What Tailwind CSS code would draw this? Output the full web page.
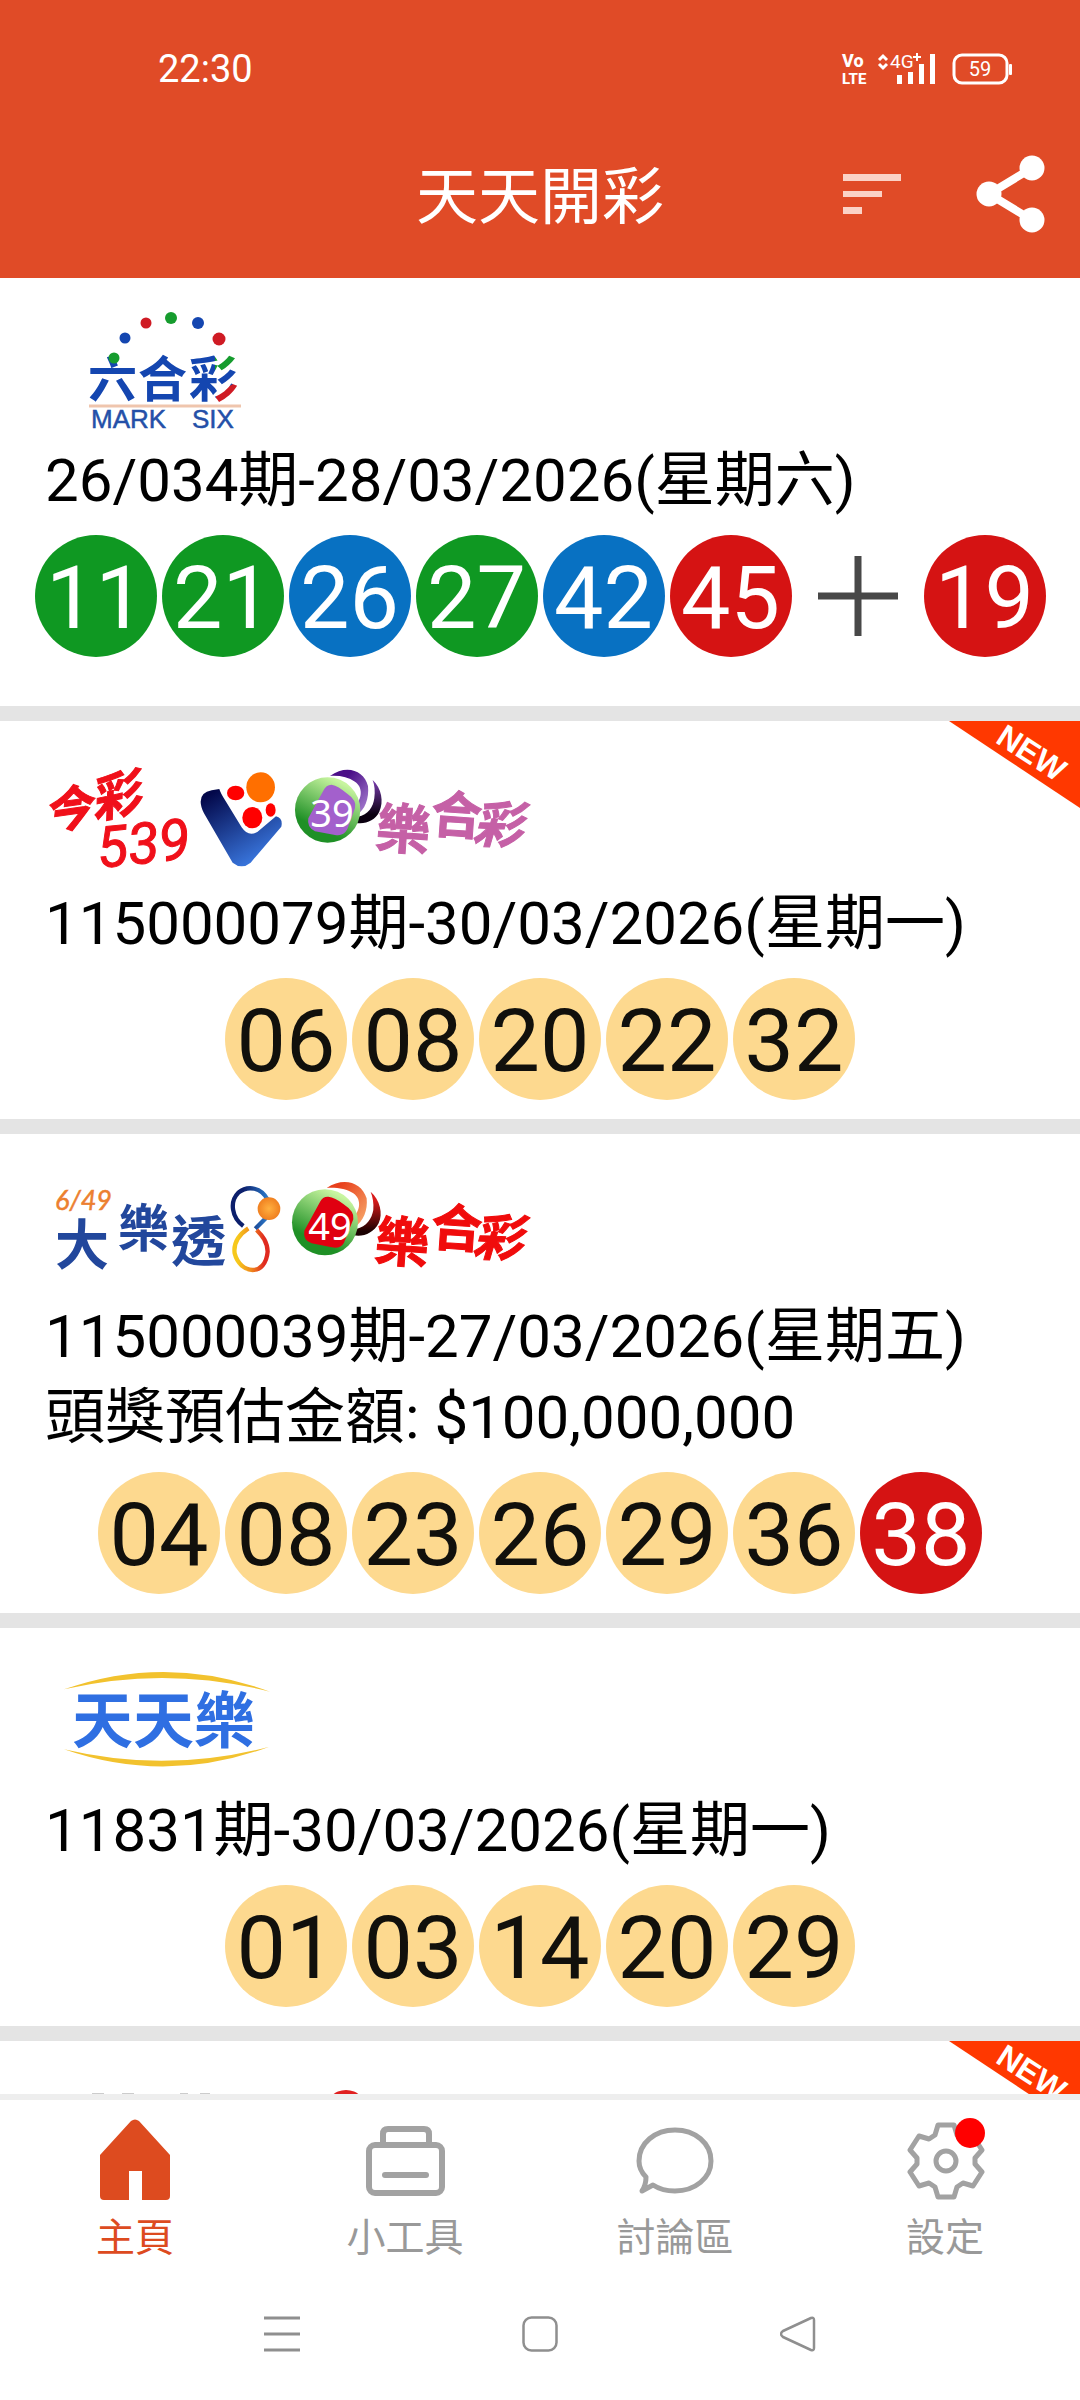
<!DOCTYPE html>
<html lang="zh-Hant">
<head>
  <meta charset="UTF-8">
  <meta name="viewport" content="width=device-width, initial-scale=1.0">
  <title>天天開彩</title>
  <script src="https://cdn.jsdelivr.net/npm/@tailwindcss/browser@4"></script>
</head>
<body class="h-screen flex flex-col bg-white text-black font-['Roboto','Noto_Sans_CJK_TC',sans-serif]">
  <header class="bg-[#e04b27] text-white">
    <!-- Status bar -->
    <div class="flex items-center justify-between pt-11 pb-6 pl-[158px] pr-[68px]">
      <span class="text-[38px] leading-[50px]">22:30</span>
      <svg class="w-[170px] h-8 overflow-visible" viewBox="0 0 170 32" fill="#fff" aria-label="4G+ 59%">
        <g font-family="Roboto, sans-serif" font-weight="800">
          <text x="0" y="14" font-size="18">Vo</text>
          <text x="0" y="31" font-size="15">LTE</text>
        </g>
        <path d="M37 7l4-4 4 4M37 11l4 4 4-4" fill="none" stroke="#fff" stroke-width="3"/>
        <text x="48" y="15" font-size="19" font-family="Roboto, sans-serif">4G</text>
        <path d="M75 0v8M71 4h8" stroke="#fff" stroke-width="2"/>
        <path d="M55 22h5v9h-5zM66 19h5v12h-5zM77 11h5v20h-5zM88 1h5v30h-5z"/>
        <rect x="112" y="2" width="53" height="28" rx="8" fill="none" stroke="#fff" stroke-width="3"/>
        <rect x="167" y="11" width="3" height="11" rx="1"/>
        <text x="138" y="23" font-size="20" text-anchor="middle" font-family="Roboto, sans-serif">59</text>
      </svg>
    </div>
    <!-- App bar -->
    <div class="grid grid-cols-[1fr_auto_1fr] items-center h-[160px]">
      <h1 class="col-start-2 text-[62px] leading-[90px]">天天開彩</h1>
      <div class="flex items-center justify-end gap-[75px] pb-2 pr-[35px]">
        <button type="button" aria-label="排序">
          <svg class="w-[58px] h-10" viewBox="0 0 58 40" fill="#fbd2c6"><path d="M0 0h58v7H0zM0 17h39v6H0zM0 33h19v7H0z"/></svg>
        </button>
        <button type="button" aria-label="分享">
          <svg class="w-[69px] h-20" viewBox="0 0 69 80" fill="#fff">
            <path d="M56 14L13 40l43 26" fill="none" stroke="#fff" stroke-width="8"/>
            <circle cx="56" cy="14" r="12.5"/><circle cx="13" cy="40" r="12.5"/><circle cx="56" cy="66" r="12.5"/>
          </svg>
        </button>
      </div>
    </div>
  </header>

  <main class="flex-1 min-h-0 overflow-hidden divide-y-[15px] divide-[#e4e4e4]">
    <!-- Mark Six -->
    <section class="pb-[49px]">
      <svg class="block ml-[45px] w-[515px] h-[162px]" viewBox="45 0 515 162" role="img" aria-label="六合彩 Mark Six">
        <defs>
          <!-- 彩: three right-hand strokes in green, blue and red -->
          <pattern id="strokes" patternUnits="userSpaceOnUse" x="180" y="60" width="70" height="80">
            <path d="M0 0h70v80H0z" fill="#1446b0"/>
            <path d="M35 0h35v22L35 37z" fill="#169c2e"/>
            <path d="M36 80V56L70 36v44z" fill="#cf1b24"/>
          </pattern>
        </defs>
        <g font-family="Noto Sans CJK TC, sans-serif" font-size="49" font-weight="700" fill="#1446b0">
          <text x="88" y="119">六</text>
          <text x="138" y="119">合</text>
          <text x="189" y="119" fill="url(#strokes)">彩</text>
        </g>
        <circle cx="114" cy="80" r="5.5" fill="#169c2e"/>
        <circle cx="125" cy="60" r="5.5" fill="#1446b0"/>
        <circle cx="146" cy="45" r="5.5" fill="#cf1b24"/>
        <circle cx="171" cy="40" r="6" fill="#169c2e"/>
        <circle cx="198" cy="45" r="6" fill="#1446b0"/>
        <circle cx="219" cy="61" r="6.5" fill="#cf1b24"/>
        <path d="M89 128h152" stroke="#efc5ad" stroke-width="3"/>
        <g font-family="Liberation Sans, sans-serif" font-size="26" fill="#2450a8" stroke="#2450a8" stroke-width="0.5">
          <text x="91" y="150">MARK</text>
          <text x="192" y="150">SIX</text>
        </g>
      </svg>
      <p class="px-[45px] text-[60px] leading-[81px]">26/034期-28/03/2026(星期六)</p>
      <ul class="mt-3.5 flex justify-center gap-[5px] text-white text-[88px] leading-[126px] text-center">
        <li class="size-[122px] rounded-full bg-[#0f9822]">11</li>
        <li class="size-[122px] rounded-full bg-[#0f9822]">21</li>
        <li class="size-[122px] rounded-full bg-[#0871c2]">26</li>
        <li class="size-[122px] rounded-full bg-[#0f9822]">27</li>
        <li class="size-[122px] rounded-full bg-[#0871c2]">42</li>
        <li class="size-[122px] rounded-full bg-[#d51313]">45</li>
        <li class="size-[122px] flex items-center justify-center" aria-label="特別號碼">
          <svg class="size-20" viewBox="0 0 80 80"><path d="M40 0v80M0 40h80" stroke="#484848" stroke-width="7"/></svg>
        </li>
        <li class="size-[122px] rounded-full bg-[#d51313]">19</li>
      </ul>
    </section>

    <!-- 539 -->
    <section class="relative pb-[19px]">
      <svg class="absolute top-0 right-0 w-[131px] h-[87px]" viewBox="0 0 131 87">
        <path d="M0 0h131v87z" fill="#ff3800"/>
        <text transform="translate(83 31) rotate(33)" y="12" text-anchor="middle" font-family="Liberation Sans, sans-serif" font-size="32" font-weight="700" fill="#fff">NEW</text>
      </svg>
      <svg class="block ml-[45px] w-[515px] h-[162px] overflow-visible" viewBox="45 0 515 162" role="img" aria-label="今彩539 39樂合彩">
        <defs>
          <linearGradient id="navy" x1="0" y1="0" x2="0.6" y2="1"><stop offset="0.1" stop-color="#03084a"/><stop offset="1" stop-color="#3a78e0"/></linearGradient>
          <linearGradient id="ball-green" x1="0.8" y1="0" x2="0.3" y2="1"><stop offset="0.1" stop-color="#c8f5a0"/><stop offset="0.8" stop-color="#1f9026"/></linearGradient>
          <linearGradient id="purple-ring" x1="0" y1="0" x2="1" y2="1"><stop offset="0.3" stop-color="#4b0f88"/><stop offset="1" stop-color="#b08ad8"/></linearGradient>
          <linearGradient id="dark-purple" x1="0" y1="0" x2="0" y2="1"><stop offset="0" stop-color="#7a3cb0"/><stop offset="0.8" stop-color="#0a0010"/></linearGradient>
        </defs>
        <g font-family="Noto Sans CJK TC, sans-serif" font-weight="700" font-style="italic" fill="#f0101a" stroke="#f0101a">
          <text transform="translate(46 109) rotate(-8)" font-size="48">今</text>
          <text transform="translate(94 98) rotate(-12)" font-size="50">彩</text>
        </g>
        <text transform="translate(99 147) rotate(-6)" font-family="Roboto, sans-serif" font-size="57" font-style="italic" fill="#f0101a" stroke="#f0101a">539</text>
        <g transform="translate(30 29) scale(.3333)">
          <path d="M512 155Q512 127 545 121L568 117Q572 130 585 150L635 232Q655 262 682 246L738 199Q760 205 754 230L662 338Q635 360 608 338L522 190Q512 170 512 155Z" fill="url(#navy)"/>
          <ellipse cx="617" cy="129" rx="26" ry="22" fill="#f00"/>
          <ellipse cx="692" cy="112" rx="43" ry="45" fill="#ff6f00"/>
          <ellipse cx="667" cy="203" rx="30" ry="32" fill="#f00"/>
          <ellipse cx="722" cy="180" rx="15" ry="20" fill="#f00"/>
          <path d="M900 78C950 42 1003 62 1014 108C1018 145 1005 180 980 195L972 170C1000 145 998 110 975 95C955 82 930 76 900 78Z" fill="url(#purple-ring)"/>
          <path d="M1028 90C1055 115 1062 155 1048 185C1035 212 1005 224 976 218L984 200C1015 195 1030 170 1033 145C1036 125 1034 105 1028 90Z" fill="url(#dark-purple)"/>
          <circle cx="893" cy="180" r="98" fill="url(#ball-green)"/>
          <path d="M905 104Q925 108 950 130Q982 152 975 175L952 238Q940 260 915 255L855 244Q830 232 835 205L880 122Q888 104 905 104Z" fill="#a360cc"/>
        </g>
        <text x="332" y="106" text-anchor="middle" font-family="Noto Sans, sans-serif" font-size="38" fill="#fff">39</text>
        <g font-family="Noto Sans CJK TC, sans-serif" font-weight="700" fill="#c560a6" stroke="#c560a6">
          <text transform="translate(375 126) rotate(4)" font-size="54">樂</text>
          <text transform="translate(430 111) rotate(4)" font-size="51">合</text>
          <text transform="translate(472 121) rotate(2)" font-size="50" font-style="italic">彩</text>
        </g>
      </svg>
      <p class="px-[45px] text-[60px] leading-[81px]">115000079期-30/03/2026(星期一)</p>
      <ul class="mt-3.5 flex justify-center gap-[5px] text-[#11100c] text-[88px] leading-[126px] text-center">
        <li class="size-[122px] rounded-full bg-[#fdd98f]">06</li>
        <li class="size-[122px] rounded-full bg-[#fdd98f]">08</li>
        <li class="size-[122px] rounded-full bg-[#fdd98f]">20</li>
        <li class="size-[122px] rounded-full bg-[#fdd98f]">22</li>
        <li class="size-[122px] rounded-full bg-[#fdd98f]">32</li>
      </ul>
    </section>

    <!-- 6/49 -->
    <section class="pb-[19px]">
      <svg class="block ml-[45px] w-[515px] h-[162px]" viewBox="45 0 515 162" role="img" aria-label="6/49 大樂透 49樂合彩">
        <defs>
          <linearGradient id="orange-ring" x1="0" y1="0" x2="1" y2="1"><stop offset="0.2" stop-color="#e8401c"/><stop offset="1" stop-color="#f8b070"/></linearGradient>
          <linearGradient id="dark-red" x1="0" y1="0" x2="0" y2="1"><stop offset="0.2" stop-color="#d81a1a"/><stop offset="0.9" stop-color="#1a0000"/></linearGradient>
          <linearGradient id="loop-blue" x1="0" y1="0" x2="1" y2="0"><stop offset="0.3" stop-color="#0c1f6c"/><stop offset="1" stop-color="#2b78c8"/></linearGradient>
          <radialGradient id="orange-ball"><stop offset="0" stop-color="#ffb040"/><stop offset="1" stop-color="#f08020"/></radialGradient>
          <linearGradient id="loop-warm" x1="0" y1="0" x2="1" y2="0"><stop offset="0.1" stop-color="#f6c81c"/><stop offset="0.5" stop-color="#f08a1c"/><stop offset="0.9" stop-color="#e02a20"/></linearGradient>
        </defs>
        <text x="55" y="76" font-family="Lato, sans-serif" font-size="27" font-style="italic" fill="#ec8030" stroke="#ec8030" stroke-width="0.5">6/49</text>
        <g font-family="Noto Sans CJK TC, sans-serif" font-weight="700" fill="#22479c">
          <text x="55" y="131" font-size="54">大</text>
          <text x="118" y="113" font-size="51">樂</text>
          <text x="171" y="127" font-size="55">透</text>
        </g>
        <g transform="translate(30 26) scale(.3333)">
          <g fill="none" stroke-width="13">
            <path d="M640 198C605 172 598 125 625 98C655 74 695 84 712 118M708 174L676 206" stroke="url(#loop-blue)"/>
            <path d="M655 205C625 225 610 250 614 280C622 312 645 330 668 330C690 330 710 312 713 275C712 245 698 228 680 210" stroke="url(#loop-warm)"/>
          </g>
          <circle cx="717" cy="146" r="34" fill="url(#orange-ball)"/>
          <path d="M890 84C940 50 995 66 1010 115C1014 150 1000 185 975 200L967 175C995 150 993 115 970 100C950 87 920 82 890 84Z" fill="url(#orange-ring)"/>
          <path d="M1022 95C1050 120 1060 160 1046 190C1030 220 1000 232 970 226L979 207C1010 200 1026 175 1030 150C1032 130 1028 110 1022 95Z" fill="url(#dark-red)"/>
          <circle cx="885" cy="187" r="99" fill="url(#ball-green)"/>
          <path d="M895 110Q915 112 940 132Q975 155 970 178L942 248Q932 267 905 262L845 250Q818 240 823 212L870 126Q878 109 895 110Z" fill="#e00010"/>
        </g>
        <text x="330" y="106" text-anchor="middle" font-family="Noto Sans, sans-serif" font-size="38" fill="#fff">49</text>
        <g font-family="Noto Sans CJK TC, sans-serif" font-weight="700" fill="#f00c0c" stroke="#f00c0c">
          <text transform="translate(374 126) rotate(4)" font-size="54">樂</text>
          <text transform="translate(430 111) rotate(4)" font-size="51">合</text>
          <text transform="translate(472 121) rotate(2)" font-size="50" font-style="italic">彩</text>
        </g>
      </svg>
      <p class="px-[45px] text-[60px] leading-[81px]">115000039期-27/03/2026(星期五)<br>頭獎預估金額: $100,000,000</p>
      <ul class="mt-3.5 flex justify-center gap-[5px] text-[#11100c] text-[88px] leading-[126px] text-center">
        <li class="size-[122px] rounded-full bg-[#fdd98f]">04</li>
        <li class="size-[122px] rounded-full bg-[#fdd98f]">08</li>
        <li class="size-[122px] rounded-full bg-[#fdd98f]">23</li>
        <li class="size-[122px] rounded-full bg-[#fdd98f]">26</li>
        <li class="size-[122px] rounded-full bg-[#fdd98f]">29</li>
        <li class="size-[122px] rounded-full bg-[#fdd98f]">36</li>
        <li class="size-[122px] rounded-full bg-[#d51313] text-white">38</li>
      </ul>
    </section>

    <!-- 天天樂 -->
    <section class="pb-[19px]">
      <svg class="block ml-[45px] w-[515px] h-[162px]" viewBox="45 0 515 162" role="img" aria-label="天天樂">
        <g transform="translate(40 22) scale(.3333)" fill="#f2c22e">
          <path d="M72 118Q380 10 690 125Q380 46 72 118Z"/>
          <path d="M72 298Q380 405 688 290Q380 371 72 298Z"/>
        </g>
        <text x="72" y="115" font-family="Noto Sans CJK TC, sans-serif" font-size="61" font-weight="700" fill="#2f6fe2">天天樂</text>
      </svg>
      <p class="px-[45px] text-[60px] leading-[81px]">11831期-30/03/2026(星期一)</p>
      <ul class="mt-3.5 flex justify-center gap-[5px] text-[#11100c] text-[88px] leading-[126px] text-center">
        <li class="size-[122px] rounded-full bg-[#fdd98f]">01</li>
        <li class="size-[122px] rounded-full bg-[#fdd98f]">03</li>
        <li class="size-[122px] rounded-full bg-[#fdd98f]">14</li>
        <li class="size-[122px] rounded-full bg-[#fdd98f]">20</li>
        <li class="size-[122px] rounded-full bg-[#fdd98f]">29</li>
      </ul>
    </section>

    <!-- Next draw, scrolled under the tab bar -->
    <section class="relative">
      <svg class="absolute top-0 right-0 w-[131px] h-[87px]" viewBox="0 0 131 87">
        <path d="M0 0h131v87z" fill="#ff3800"/>
        <text transform="translate(83 31) rotate(33)" y="12" text-anchor="middle" font-family="Liberation Sans, sans-serif" font-size="32" font-weight="700" fill="#fff">NEW</text>
      </svg>
      <svg class="block ml-[45px] w-[515px] h-[162px]" viewBox="45 0 515 162">
        <path d="M92 53h12M122 53h12M180 53h8M200 53h10" stroke="#ccc" stroke-width="2"/>
        <circle cx="346" cy="70" r="21" fill="#e02020"/>
      </svg>
    </section>
  </main>

  <footer class="border-t-6 border-[#eee]">
    <nav class="grid grid-cols-4 pt-[18px] text-center text-[39px] leading-[48px] text-[#999]">
      <a href="#" class="flex flex-col items-center gap-3 text-[#dd4b1f]">
        <svg class="w-20 h-[84px]" viewBox="0 0 80 84"><path d="M36 3Q40 0 44 3L75 37V78Q75 82 71 82H47V53H34V82H9Q5 82 5 78V37Z" fill="#dd4b1f"/></svg>
        主頁
      </a>
      <a href="#" class="flex flex-col items-center gap-3">
        <svg class="w-20 h-[84px]" viewBox="0 0 80 84" fill="none" stroke="#a2a2a2" stroke-width="6">
          <rect x="4" y="27" width="73" height="48" rx="6"/>
          <path d="M18 27V16Q18 11 23 11H59Q64 11 64 16V27"/>
          <path d="M20 57H61" stroke-linecap="round"/>
        </svg>
        小工具
      </a>
      <a href="#" class="flex flex-col items-center gap-3">
        <svg class="w-20 h-[84px]" viewBox="0 0 80 84" fill="none" stroke="#a2a2a2" stroke-width="5">
          <path d="M11 59C6 54 4 49 4 43C4 25 20 12 40 12C60 12 76 25 76 43C76 60 60 73 40 73C32 73 24 71 18 67L7 73Q11 67 11 59Z" stroke-linejoin="round"/>
        </svg>
        討論區
      </a>
      <a href="#" class="flex flex-col items-center gap-3">
        <svg class="w-20 h-[84px]" viewBox="-41 -43 80 84" fill="none" stroke="#a2a2a2" stroke-width="5" stroke-linejoin="round">
          <path d="M-11 -26L-8 -36H8L11 -26L17 -22L27 -25L36 -11L29 -3V3L36 11L27 25L17 22L11 26L8 36H-8L-11 26L-17 22L-27 25L-36 11L-29 3V-3L-36 -11L-27 -25L-17 -22Z"/>
          <circle r="10"/>
          <circle cx="24" cy="-28" r="15" fill="#f00" stroke="none"/>
        </svg>
        設定
      </a>
    </nav>
    <!-- System keys -->
    <div class="flex justify-center gap-[222px] pt-[54px] pb-12">
      <button type="button" aria-label="最近">
        <svg class="size-9" viewBox="0 0 36 36" stroke="#8f8f8f" stroke-width="3"><path d="M0 2h36M0 18h36M0 34h36"/></svg>
      </button>
      <button type="button" aria-label="主畫面">
        <svg class="size-9" viewBox="0 0 36 36" fill="none" stroke="#8f8f8f" stroke-width="2.5"><rect x="1.5" y="1.5" width="33" height="33" rx="8"/></svg>
      </button>
      <button type="button" aria-label="返回">
        <svg class="size-9" viewBox="0 0 36 36" fill="none" stroke="#8f8f8f" stroke-width="2.5" stroke-linejoin="round"><path d="M31 2Q34 1 34 4V32Q34 35 31 34L3 21Q-1 18 3 15Z"/></svg>
      </button>
    </div>
  </footer>
</body>
</html>
